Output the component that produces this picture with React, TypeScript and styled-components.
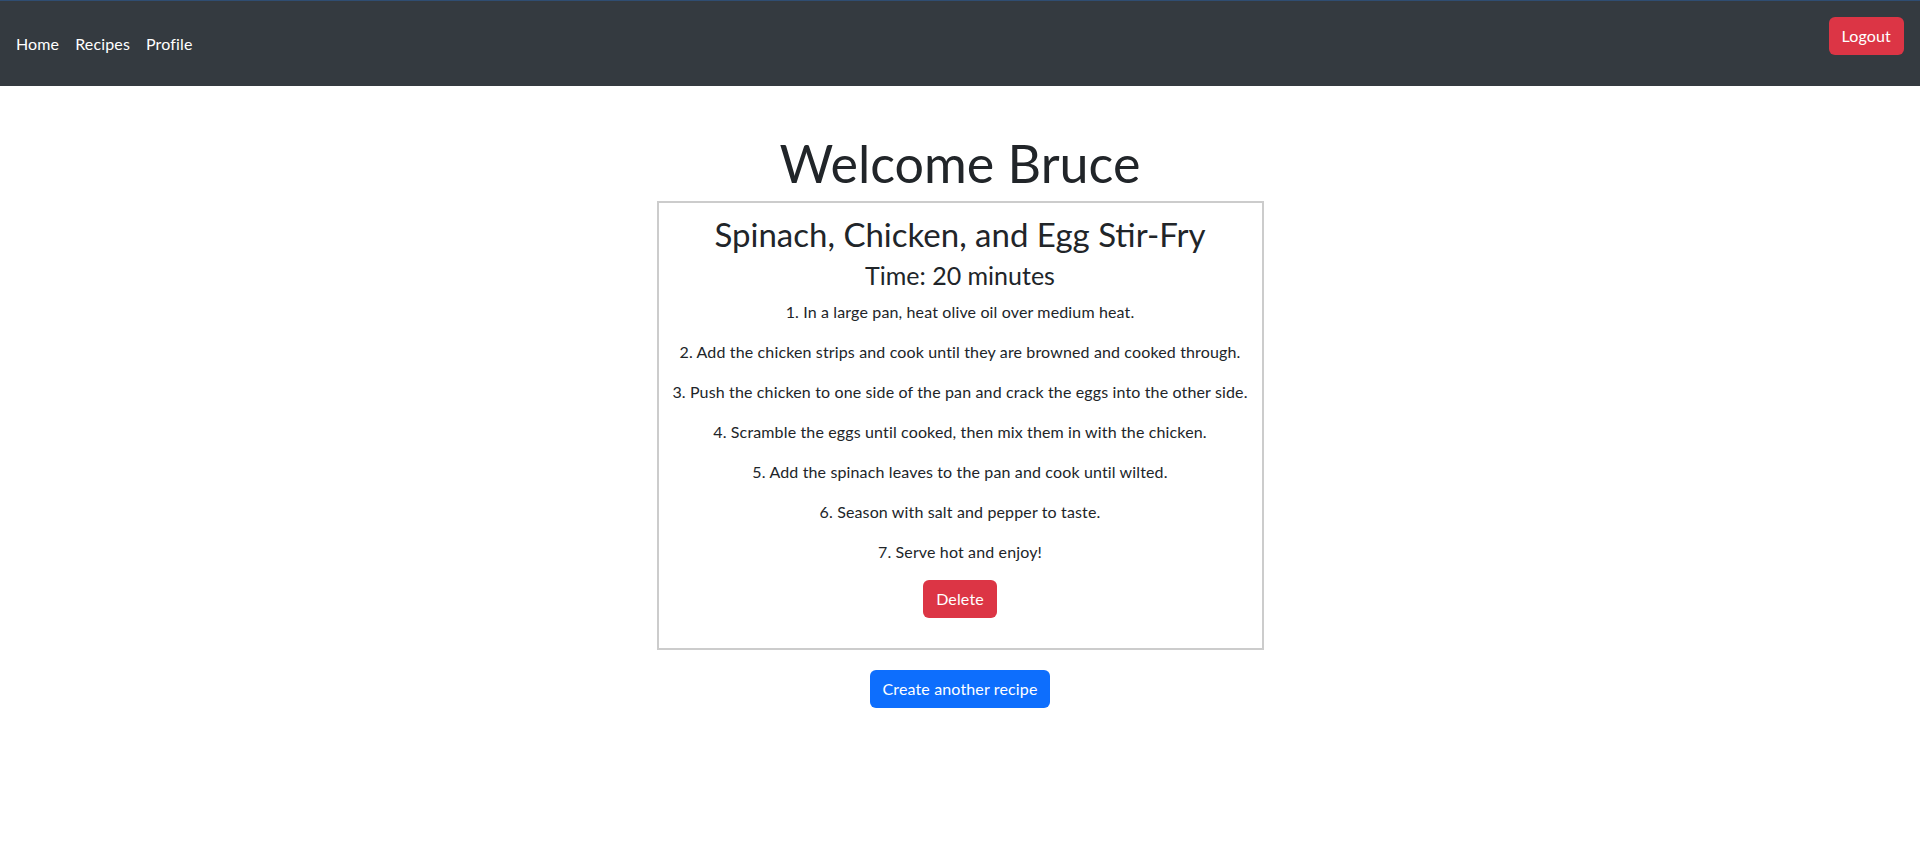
import React from 'react';
import styled, { createGlobalStyle } from 'styled-components';

const GlobalStyle = createGlobalStyle`
  * {
    box-sizing: border-box;
  }
  body {
    margin: 0;
    background: #ffffff;
    color: #212529;
    font-family: Lato, "Noto Sans", "Liberation Sans", sans-serif;
    font-size: 16px;
    line-height: 1.5;
    letter-spacing: 0.14px;
  }
`;

const recipe = {
  title: 'Spinach, Chicken, and Egg Stir-Fry',
  time: '20 minutes',
  steps: [
    '1. In a large pan, heat olive oil over medium heat.',
    '2. Add the chicken strips and cook until they are browned and cooked through.',
    '3. Push the chicken to one side of the pan and crack the eggs into the other side.',
    '4. Scramble the eggs until cooked, then mix them in with the chicken.',
    '5. Add the spinach leaves to the pan and cook until wilted.',
    '6. Season with salt and pepper to taste.',
    '7. Serve hot and enjoy!',
  ],
};

const NavBar = styled.nav`
  display: flex;
  align-items: center;
  justify-content: space-between;
  height: 86px;
  padding: 0 16px 0 8px;
  background: #343a40;
  border-top: 1px solid #2f4d72;
`;

const NavLinks = styled.div`
  display: flex;
  align-items: center;
`;

const NavLink = styled.a`
  padding: 8px;
  color: #ffffff;
  text-decoration: none;
  font-size: 16px;
  line-height: 24px;
  cursor: pointer;
`;

const Button = styled.button<{ $variant: 'danger' | 'primary' }>`
  padding: 6px 12px;
  border: 1px solid transparent;
  border-radius: 6px;
  background: ${({ $variant }) => ($variant === 'danger' ? '#dc3545' : '#0d6efd')};
  color: #ffffff;
  font-family: inherit;
  font-size: 16px;
  line-height: 24px;
  letter-spacing: inherit;
  cursor: pointer;
`;

const LogoutButton = styled(Button)`
  align-self: flex-start;
  margin-top: 16px;
`;

const Main = styled.main`
  display: flex;
  flex-direction: column;
  align-items: center;
  padding-top: 46px;
`;

const Heading = styled.h1`
  margin: 0 0 7px;
  font-size: 52px;
  font-weight: 400;
  line-height: 62.4px;
  letter-spacing: 0;
`;

const RecipeCard = styled.section`
  display: flex;
  flex-direction: column;
  align-items: center;
  width: 607px;
  padding: 12px 10px 30px;
  border: 2px solid #cccccc;
  text-align: center;
`;

const RecipeTitle = styled.h2`
  margin: 0 0 5px;
  font-size: 33px;
  font-weight: 400;
  line-height: 39.6px;
  letter-spacing: 0;
`;

const RecipeTime = styled.h4`
  margin: 0 0 10px;
  font-size: 25px;
  font-weight: 400;
  line-height: 30px;
  letter-spacing: 0;
`;

const Step = styled.p`
  margin: 0 0 16px;
  font-size: 16px;
  line-height: 24px;
`;

const CreateButton = styled(Button)`
  margin-top: 20px;
`;

export default function App() {
  return (
    <>
      <GlobalStyle />
      <NavBar>
        <NavLinks>
          <NavLink>Home</NavLink>
          <NavLink>Recipes</NavLink>
          <NavLink>Profile</NavLink>
        </NavLinks>
        <LogoutButton $variant="danger">Logout</LogoutButton>
      </NavBar>
      <Main>
        <Heading>Welcome Bruce</Heading>
        <RecipeCard>
          <RecipeTitle>{recipe.title}</RecipeTitle>
          <RecipeTime>Time: {recipe.time}</RecipeTime>
          {recipe.steps.map((step) => (
            <Step key={step}>{step}</Step>
          ))}
          <Button $variant="danger">Delete</Button>
        </RecipeCard>
        <CreateButton $variant="primary">Create another recipe</CreateButton>
      </Main>
    </>
  );
}
